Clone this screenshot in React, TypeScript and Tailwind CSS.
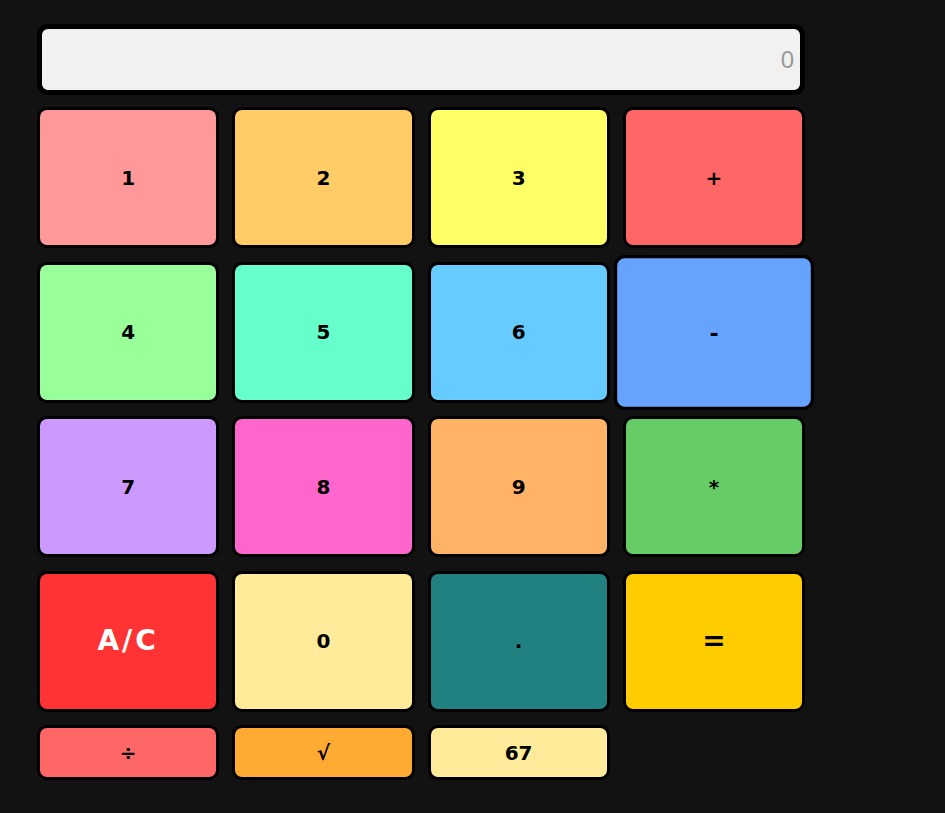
import React from "react";

type Key = {
  label: string;
  bg: string;
  text?: string;
  big?: boolean;
  wide?: boolean;
  hover?: boolean;
};

const rows: Key[][] = [
  [
    { label: "1", bg: "bg-[#ff9999]" },
    { label: "2", bg: "bg-[#ffcc66]" },
    { label: "3", bg: "bg-[#ffff66]" },
    { label: "+", bg: "bg-[#ff6666]" },
  ],
  [
    { label: "4", bg: "bg-[#99ff99]" },
    { label: "5", bg: "bg-[#66ffcc]" },
    { label: "6", bg: "bg-[#66ccff]" },
    { label: "-", bg: "bg-[#66a3ff]", hover: true },
  ],
  [
    { label: "7", bg: "bg-[#cc99ff]" },
    { label: "8", bg: "bg-[#ff66cc]" },
    { label: "9", bg: "bg-[#ffb366]" },
    { label: "*", bg: "bg-[#66cc66]" },
  ],
  [
    { label: "A/C", bg: "bg-[#ff3333]", text: "text-white", big: true, wide: true },
    { label: "0", bg: "bg-[#ffeb99]" },
    { label: ".", bg: "bg-[#218080]" },
    { label: "=", bg: "bg-[#ffcc00]", big: true },
  ],
];

const extras: Key[] = [
  { label: "÷", bg: "bg-[#ff6666]" },
  { label: "√", bg: "bg-[#ffaa33]" },
  { label: "67", bg: "bg-[#ffeb99]" },
];

function CalcKey({ k, tall }: { k: Key; tall: boolean }) {
  return (
    <button
      className={`${k.bg} ${k.text ?? "text-black"} ${tall ? "h-[141px]" : "h-[55px]"} ${
        k.big ? "text-[28px]" : "text-[20px]"
      } ${k.wide ? "tracking-[3px]" : ""} ${
        k.hover ? "scale-110" : ""
      } flex items-center justify-center rounded-[10px] border-[3px] border-black font-bold`}
    >
      {k.label}
    </button>
  );
}

export default function App() {
  return (
    <div
      className="min-h-[813px] w-full bg-[#121212] pl-[37px] pt-[24px]"
      style={{ fontFamily: '"DejaVu Sans", Verdana, sans-serif' }}
    >
      <div className="w-[768px]">
        <div
          className="flex h-[71px] items-center justify-end rounded-[11px] border-[5px] border-black bg-[#f1f1f1] pr-[6px] text-[24px] text-[#9a9a9a]"
          style={{ fontFamily: '"Liberation Sans", Arial, sans-serif' }}
        >
          0
        </div>
        <div className="mt-[12px] grid grid-cols-4 gap-x-[13px] gap-y-[13.5px]">
          {rows.flat().map((k) => (
            <CalcKey key={k.label} k={k} tall />
          ))}
          {extras.map((k) => (
            <CalcKey key={k.label} k={k} tall={false} />
          ))}
        </div>
      </div>
    </div>
  );
}
